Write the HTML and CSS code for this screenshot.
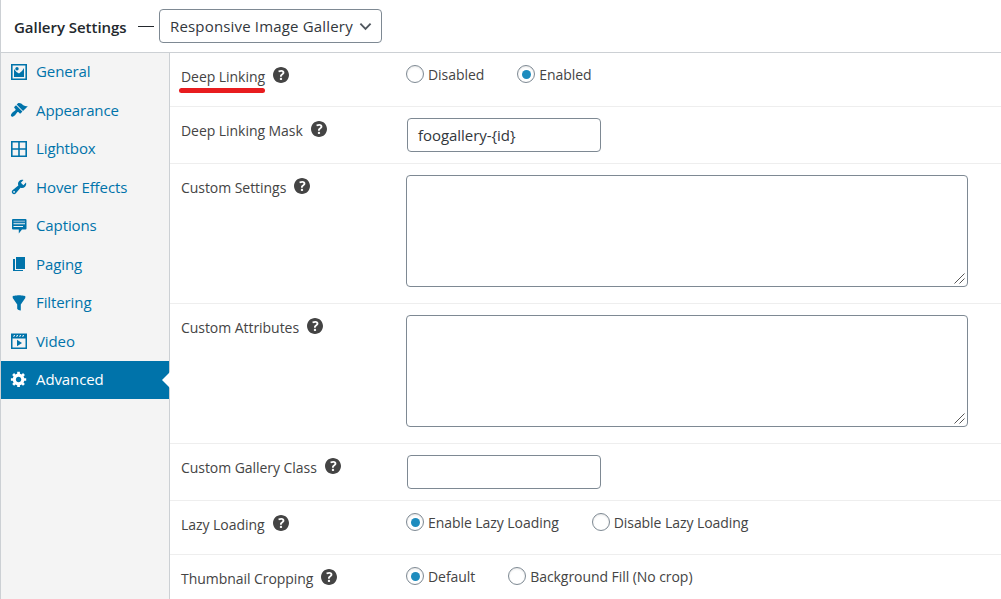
FILE: index.html
```
<!DOCTYPE html>
<html lang="en">
<head>
<meta charset="utf-8">
<title>Gallery Settings</title>
<link rel="stylesheet" href="styles.css">
</head>
<body>
<svg class="defs" width="0" height="0" aria-hidden="true">
  <symbol id="help" viewBox="3 3 14 14"><path d="M17 10c0-3.87-3.14-7-7-7-3.87 0-7 3.13-7 7s3.13 7 7 7c3.86 0 7-3.13 7-7zm-6.3 1.48H9.14v-.43c0-.38.08-.7.24-.98s.46-.57.88-.89c.41-.29.68-.53.81-.71.14-.18.2-.39.2-.62 0-.25-.09-.44-.28-.58-.19-.13-.45-.19-.79-.19-.58 0-1.25.19-2 .57l-.64-1.28c.87-.49 1.8-.74 2.77-.74.81 0 1.45.2 1.92.58.48.39.71.91.71 1.55 0 .43-.09.8-.29 1.11-.19.32-.57.67-1.11 1.06-.38.28-.61.49-.71.63-.1.15-.15.34-.15.57v.35zm-1.47 2.74c-.18-.17-.27-.42-.27-.73 0-.33.08-.58.26-.75s.43-.25.77-.25c.32 0 .57.09.75.26s.27.42.27.74c0 .3-.09.55-.27.72-.18.18-.43.27-.75.27-.33 0-.58-.09-.76-.26z"/></symbol>
</svg>
<header class="header">
  <h2 class="title">Gallery Settings</h2>
  <span class="dash"></span>
  <div class="template">
    <span class="template-name">Responsive Image Gallery</span>
    <svg class="chevron" viewBox="0 0 14 9"><path d="M1.5 1.5 7 7l5.500-5.500" fill="none" stroke="#50575e" stroke-width="2"/></svg>
  </div>
</header>
<main class="body">
  <nav class="tabs">
    <a class="tab"><svg class="icon" viewBox="0 0 18 18"><path fill-rule="evenodd" d="M1 1h16v16H1zM2.600 2.600v12.800h12.800V2.600z"/><path d="M4 14V6l2.500 3 2.500 1.500L12 8l2-3v9z"/><circle cx="7" cy="5.700" r="1.700"/></svg><span>General</span></a>
    <a class="tab"><svg class="icon" viewBox="0 0 20 20"><path d="M14.480 11.060L7.410 3.990l1.500-1.500c.5-.56 2.300-.47 3.510.32 1.210.8 1.430 1.280 2.910 2.100 1.180.64 2.450 1.260 4.450.85zm-.71.71L6.700 4.700 4.930 6.470c-.39.39-.39 1.020 0 1.410l1.060 1.060c.39.39.39 1.030 0 1.420-.6.6-1.430 1.110-2.210 1.690-.35.26-.7.53-1.010.84C1.430 14.230.4 16.080 1.400 17.070c.99 1 2.840-.03 4.180-1.360.31-.31.58-.66.85-1.020.57-.78 1.080-1.610 1.690-2.210.39-.39 1.020-.39 1.410 0l1.060 1.060c.39.39 1.020.39 1.410 0z"/></svg><span>Appearance</span></a>
    <a class="tab"><svg class="icon" viewBox="0 0 18 18"><path fill-rule="evenodd" d="M1 1h16v16H1zM2.600 2.600v5.600h5.600V2.600zM9.800 2.600v5.600h5.600V2.600zM2.600 9.800v5.600h5.600V9.800zM9.800 9.800v5.600h5.600V9.800z"/></svg><span>Lightbox</span></a>
    <a class="tab"><svg class="icon" viewBox="0 0 20 20"><path d="M16.680 9.770c-1.340 1.340-3.300 1.670-4.950.99l-5.410 6.520c-.99.99-2.590.99-3.580 0s-.99-2.590 0-3.570l6.520-5.420c-.68-1.650-.35-3.610.99-4.950 1.280-1.280 3.120-1.620 4.720-1.060l-2.890 2.890 2.820 2.820 2.860-2.870c.53 1.580.18 3.390-1.080 4.650zM3.810 16.210c.4.39 1.040.39 1.430 0 .4-.4.4-1.040 0-1.430-.39-.4-1.030-.4-1.430 0-.39.39-.39 1.030 0 1.430z"/></svg><span>Hover Effects</span></a>
    <a class="tab"><svg class="icon" viewBox="0 0 18 18"><path fill-rule="evenodd" d="M3 2h12.500q1 0 1 1v8.500q0 1-1 1H12l-3.200 4v-4H3q-1 0-1-1V3q0-1 1-1zM3.500 6.200v1h11.500v-1zM3.500 9v1h9.500V9z"/><path d="M3.500 3.500h11.500v1.700H3.500z" fill="#6fa9cb"/></svg><span>Captions</span></a>
    <a class="tab"><svg class="icon" viewBox="0 0 18 18"><path d="M6 2h9v12H6z"/><path d="M3 4h2v11h8v1H3z"/></svg><span>Paging</span></a>
    <a class="tab"><svg class="icon" viewBox="0 0 20 20"><path d="M3 4.500v-2s3.340-1 7-1 7 1 7 1v2l-5 7.030v6.970s-1.220-.09-2.250-.59S8 16.500 8 16.500v-4.970z"/></svg><span>Filtering</span></a>
    <a class="tab"><svg class="icon" viewBox="0 0 18 18"><path fill-rule="evenodd" d="M1 1.500h16V17H1zM2.500 6.500v9h13v-9zM3 4.800h1.200L5.200 3H4zM6 4.800h1.200L8.200 3H7zM9 4.800h1.200l1-1.800H10zM12 4.800h1.200l1-1.800H13z"/><path d="M7 7.800v6.400l5-3.200z"/></svg><span>Video</span></a>
    <a class="tab active"><svg class="icon" viewBox="0 0 20 20"><path d="M18 12h-2.180c-.17.7-.44 1.350-.81 1.930l1.540 1.540-2.100 2.100-1.540-1.540c-.58.36-1.230.63-1.910.79V19H8v-2.180c-.68-.16-1.330-.43-1.910-.79l-1.540 1.540-2.120-2.120 1.540-1.540c-.36-.58-.63-1.230-.79-1.910H1V9.030h2.170c.16-.7.44-1.350.8-1.940L2.430 5.550l2.100-2.100 1.540 1.540c.58-.37 1.240-.64 1.930-.81V2h3v2.180c.68.16 1.330.43 1.910.79l1.540-1.540 2.120 2.120-1.540 1.540c.36.59.64 1.240.8 1.940H18V12zm-8.500 1.500c1.660 0 3-1.340 3-3s-1.340-3-3-3-3 1.340-3 3 1.340 3 3 3z"/></svg><span>Advanced</span></a>
  </nav>
  <section class="settings">
    <div class="row row-first">
      <div class="label"><span class="marked">Deep Linking</span><svg class="help"><use href="#help"/></svg></div>
      <div class="radios"><label class="option"><i class="radio"></i><span>Disabled</span></label><label class="option"><i class="radio on"></i><span>Enabled</span></label></div>
    </div>
    <div class="row row-input">
      <div class="label"><span>Deep Linking Mask</span><svg class="help"><use href="#help"/></svg></div>
      <div class="field"><span>foogallery-{id}</span></div>
    </div>
    <div class="row row-area">
      <div class="label"><span>Custom Settings</span><svg class="help"><use href="#help"/></svg></div>
      <div class="area"><svg class="grip" viewBox="0 0 11 11"><path d="M.5 10.500l10-10M5.500 10.500l5-5"/></svg></div>
    </div>
    <div class="row row-area">
      <div class="label"><span>Custom Attributes</span><svg class="help"><use href="#help"/></svg></div>
      <div class="area"><svg class="grip" viewBox="0 0 11 11"><path d="M.5 10.500l10-10M5.500 10.500l5-5"/></svg></div>
    </div>
    <div class="row row-input">
      <div class="label"><span>Custom Gallery Class</span><svg class="help"><use href="#help"/></svg></div>
      <div class="field"></div>
    </div>
    <div class="row row-radio">
      <div class="label"><span>Lazy Loading</span><svg class="help"><use href="#help"/></svg></div>
      <div class="radios"><label class="option"><i class="radio on"></i><span>Enable Lazy Loading</span></label><label class="option"><i class="radio"></i><span>Disable Lazy Loading</span></label></div>
    </div>
    <div class="row row-last">
      <div class="label"><span>Thumbnail Cropping</span><svg class="help"><use href="#help"/></svg></div>
      <div class="radios"><label class="option"><i class="radio on"></i><span>Default</span></label><label class="option"><i class="radio"></i><span>Background Fill (No crop)</span></label></div>
    </div>
  </section>
</main>
</body>
</html>
```
FILE: styles.css
```
* { box-sizing: border-box; }
body {
  margin: 0;
  width: 1001px;
  height: 599px;
  overflow: hidden;
  display: flex;
  flex-direction: column;
  background: #fff;
  border-left: 1px solid #ccd0d4;
  font-family: "Open Sans", "Noto Sans", sans-serif;
  font-size: 14px;
  line-height: 20px;
  color: #444;
}
.defs { display: none; }
.header {
  flex: none;
  display: flex;
  align-items: center;
  height: 53px;
  padding-left: 13px;
  border-bottom: 1px solid #ccd0d4;
}
.title {
  margin: 0;
  width: 124px;
  padding-top: 1px;
  font-size: 15px;
  font-weight: 600;
  letter-spacing: -0.03px;
  color: #23282d;
  white-space: nowrap;
}
.dash { width: 16px; height: 1px; background: #23282d; }
.template {
  display: flex;
  align-items: center;
  justify-content: space-between;
  width: 223px;
  height: 34px;
  margin-left: 5px;
  padding: 0 9px 0 10px;
  border: 1px solid #7e8993;
  border-radius: 4px;
  font-weight: 500;
  font-size: 15px;
  color: #32373c;
  letter-spacing: 0.17px;
  white-space: nowrap;
}
.chevron { width: 13px; height: 9px; flex: none; }
.body { flex: 1; display: flex; min-height: 0; }
.tabs {
  flex: none;
  width: 169px;
  background: #f4f4f4;
  border-right: 1px solid #ccd0d4;
}
.tab {
  position: relative;
  display: flex;
  align-items: center;
  gap: 8px;
  height: 38.5px;
  padding: 0 0 2.5px 9px;
  font-size: 15px;
  color: #0073aa;
  letter-spacing: -0.1px;
  white-space: nowrap;
}
.icon { width: 18px; height: 18px; fill: currentColor; flex: none; }
.tab:not(.active) .icon { margin-top: 1px; }
.active { height: 38px; padding-bottom: 2px; background: #0073aa; color: #fff; }
.active::after {
  content: "";
  position: absolute;
  right: -1px;
  top: 11px;
  border: 8px solid transparent;
  border-left-width: 0;
  border-right-color: #fff;
}
.settings { flex: 1; min-width: 0; }
.row {
  display: flex;
  align-items: flex-start;
  padding: 11px 0 0 11px;
  border-bottom: 1px solid #eee;
}
.row-first { height: 54px; }
.row-input { height: 57px; }
.row-area { height: 140px; }
.row-radio { height: 54px; }
.row-last { height: 60px; }
.label {
  display: flex;
  width: 225px;
  padding-top: 3px;
  letter-spacing: -0.05px;
  white-space: nowrap;
}
.help { width: 16px; height: 16px; margin: -0.5px 0 0 8px; fill: #444; flex: none; }
.marked { position: relative; }
.marked::after {
  content: "";
  position: absolute;
  left: -2px;
  right: 0;
  top: 21px;
  height: 5px;
  border-radius: 3px;
  background: #e81c1f;
}
.field {
  display: flex;
  align-items: center;
  width: 194px;
  height: 34px;
  margin-left: 1px;
  padding: 0 10px;
  border: 1px solid #7e8993;
  border-radius: 4px;
  font-size: 15px;
  letter-spacing: -0.05px;
  color: #32373c;
}
.area {
  display: flex;
  align-items: flex-end;
  justify-content: flex-end;
  width: 562px;
  height: 112px;
  padding: 2px;
  border: 1px solid #7e8993;
  border-radius: 4px;
}
.grip { width: 11px; height: 11px; fill: none; stroke: #555; }
.radios { display: flex; gap: 33px; letter-spacing: -0.06px; }
.option { display: flex; align-items: center; gap: 4px; height: 20px; white-space: nowrap; }
.option span { padding-top: 1px; }
.radio {
  display: flex;
  align-items: center;
  justify-content: center;
  width: 18px;
  height: 18px;
  border: 1px solid #7e8993;
  border-radius: 50%;
  box-shadow: inset 0 1px 2px rgba(0, 0, 0, .1);
}
.on::before {
  content: "";
  width: 9px;
  height: 9px;
  border-radius: 50%;
  background: #1e8cbe;
}
```
